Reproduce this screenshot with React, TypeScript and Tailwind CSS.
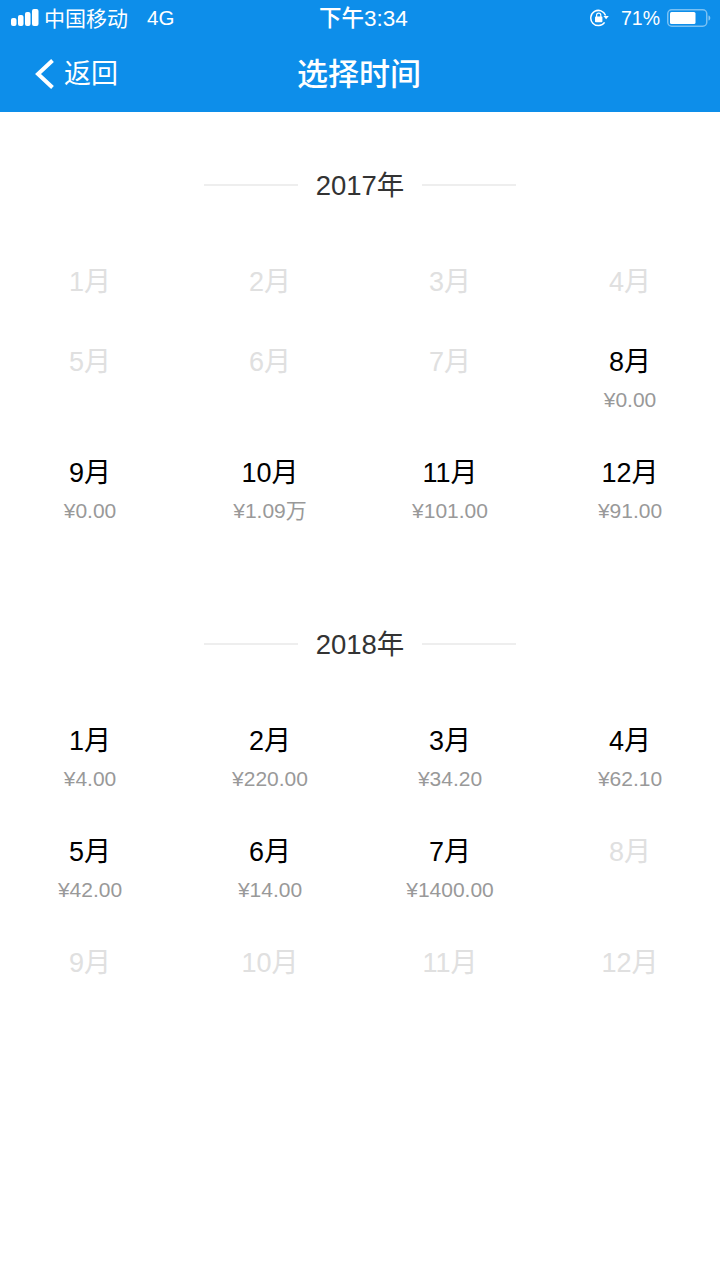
const fontStack = "font-['Liberation_Sans','Noto_Sans_CJK_SC',sans-serif]"

type Month = { label: string; amount?: string }

const data2017: Month[] = [
  { label: '1月' },
  { label: '2月' },
  { label: '3月' },
  { label: '4月' },
  { label: '5月' },
  { label: '6月' },
  { label: '7月' },
  { label: '8月', amount: '¥0.00' },
  { label: '9月', amount: '¥0.00' },
  { label: '10月', amount: '¥1.09万' },
  { label: '11月', amount: '¥101.00' },
  { label: '12月', amount: '¥91.00' },
]

const data2018: Month[] = [
  { label: '1月', amount: '¥4.00' },
  { label: '2月', amount: '¥220.00' },
  { label: '3月', amount: '¥34.20' },
  { label: '4月', amount: '¥62.10' },
  { label: '5月', amount: '¥42.00' },
  { label: '6月', amount: '¥14.00' },
  { label: '7月', amount: '¥1400.00' },
  { label: '8月' },
  { label: '9月' },
  { label: '10月' },
  { label: '11月' },
  { label: '12月' },
]

function Signal() {
  return (
    <svg width="28" height="18" viewBox="0 0 28 18" className="mr-[5px]">
      <rect x="0" y="9" width="5.5" height="8" rx="2" fill="#fff" />
      <rect x="7" y="6" width="5.5" height="11" rx="2" fill="#fff" />
      <rect x="14" y="3" width="5.5" height="14" rx="2" fill="#fff" />
      <rect x="21" y="0" width="6.5" height="17" rx="2" fill="#fff" />
    </svg>
  )
}

function RotationLock() {
  return (
    <svg width="19" height="18" viewBox="0 0 19 18" fill="none">
      <path d="M14.6 13.4A7.6 7.6 0 1 1 15.6 6.6" stroke="#fff" strokeWidth="1.5" />
      <path d="M13.4 7h5.4l-2.7 3.2z" fill="#fff" />
      <rect x="5" y="7.6" width="7.4" height="5.6" rx="0.8" fill="#fff" />
      <path d="M6.6 8V6.3a2.1 2.1 0 0 1 4.2 0V8" stroke="#fff" strokeWidth="1.2" />
    </svg>
  )
}

function Battery() {
  return (
    <svg width="44" height="18" viewBox="0 0 44 18" fill="none">
      <rect x="0.75" y="0.75" width="39" height="16.5" rx="4" stroke="#fff" strokeOpacity="0.45" strokeWidth="1.5" />
      <rect x="3" y="3" width="25.5" height="12" rx="1.5" fill="#fff" />
      <path d="M41.5 6.5c1.2.3 1.8 1.3 1.8 2.5s-.6 2.2-1.8 2.5z" fill="#fff" fillOpacity="0.5" />
    </svg>
  )
}

function StatusBar() {
  return (
    <div className="relative flex h-10 items-center justify-between pb-1 pl-[11px] pr-[9px] text-white">
      <div className="flex items-center">
        <Signal />
        <span className="text-[21px] leading-none">中国移动</span>
        <span className="ml-[19px] mt-[1px] text-[20.5px] leading-none">4G</span>
      </div>
      <span className="absolute left-[319px] top-[6px] text-[22.5px] font-medium leading-[26px]">下午3:34</span>
      <div className="flex items-center">
        <RotationLock />
        <span className="ml-[12px] mt-[1px] text-[19.5px] leading-none">71%</span>
        <span className="ml-[7px] flex"><Battery /></span>
      </div>
    </div>
  )
}

function NavBar() {
  return (
    <div className="relative flex h-[72px] items-center justify-center text-white">
      <div className="absolute left-[34px] top-[18px] flex items-center">
        <svg width="22" height="32" viewBox="0 0 22 32" fill="none">
          <path d="M18.5 2.5 4 16l14.5 13.5" stroke="#fff" strokeWidth="4" />
        </svg>
        <span className="ml-[8px] text-[27px] leading-8">返回</span>
      </div>
      <h1 className="mb-[3px] ml-[-2px] text-[31px] font-medium leading-10">选择时间</h1>
    </div>
  )
}

function YearTitle({ year }: { year: string }) {
  return (
    <div className="flex h-10 items-center justify-center">
      <div className="h-[2px] w-[94px] bg-[#eeeeee]" />
      <span className="h-10 w-[124px] text-center text-[27.5px] leading-[42px] text-[#333333]">{year}</span>
      <div className="h-[2px] w-[94px] bg-[#eeeeee]" />
    </div>
  )
}

function MonthCell({ month }: { month: Month }) {
  return (
    <div className="flex flex-col items-center pb-10">
      <div className={`h-10 text-[27px] leading-[42px] ${month.amount ? 'text-black' : 'text-[#e0e0e0]'}`}>{month.label}</div>
      {month.amount && (
        <div className="mt-[6px] h-[25px] text-[21px] leading-[25px] text-[#999999]">{month.amount}</div>
      )}
    </div>
  )
}

function YearSection({ year, months }: { year: string; months: Month[] }) {
  return (
    <section>
      <YearTitle year={year} />
      <div className="mt-14 grid grid-cols-4">
        {months.map((m) => (
          <MonthCell key={m.label} month={m} />
        ))}
      </div>
    </section>
  )
}

export default function App() {
  return (
    <main className={`h-[1280px] w-[720px] overflow-hidden bg-white ${fontStack}`}>
      <header className="bg-[#0d8eea]">
        <StatusBar />
        <NavBar />
      </header>
      <div className="flex flex-col gap-[61px] pt-[53px]">
        <YearSection year="2017年" months={data2017} />
        <YearSection year="2018年" months={data2018} />
      </div>
    </main>
  )
}
